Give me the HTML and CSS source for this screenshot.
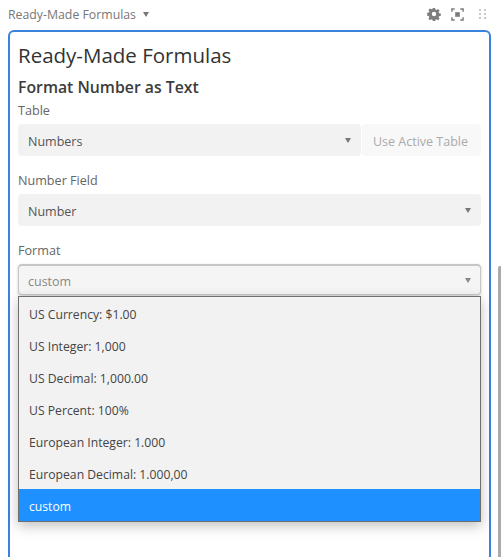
FILE: index.html
```html
<!DOCTYPE html>
<html lang="en">
<head>
  <meta charset="UTF-8" />
  <title>Ready-Made Formulas</title>
  <link rel="stylesheet" href="styles.css">
</head>
<body>
  <div class="topbar">
    <div class="widget-title">Ready-Made Formulas <span class="caret caret-title"></span></div>
    <div class="tools">
      <svg class="tool" width="14" height="14" viewBox="0 0 16 16">
        <path fill="#7d7d7d" fill-rule="evenodd" d="M6.700 1h2.600l.4 2 1.200.5 1.700-1.100 1.800 1.800-1.100 1.700.5 1.200 2 .4v2.600l-2 .4-.5 1.200 1.100 1.700-1.800 1.800-1.700-1.100-1.200.5-.4 2H6.700l-.4-2-1.200-.5-1.700 1.100-1.800-1.800 1.100-1.700-.5-1.200-2-.4V6.700l2-.4.5-1.200-1.100-1.700 1.800-1.800 1.700 1.100 1.200-.5zM8 5.500a2.500 2.500 0 1 0 0 5 2.500 2.500 0 0 0 0-5z"/>
      </svg>
      <svg class="tool" width="13" height="13" viewBox="0 0 14 14">
        <path fill="none" stroke="#7d7d7d" stroke-width="1.600" d="M1 4V1h3M10 1h3v3M13 10v3h-3M4 13H1v-3"/>
        <rect x="4.500" y="4.500" width="5" height="5" fill="#7d7d7d"/>
      </svg>
      <svg class="tool tool-drag" width="7" height="11" viewBox="0 0 7 11">
        <g fill="#c8c8c8">
          <rect x="0" y="0" width="2" height="2"/><rect x="5" y="0" width="2" height="2"/>
          <rect x="0" y="4" width="2" height="2"/><rect x="5" y="4" width="2" height="2"/>
          <rect x="0" y="8" width="2" height="2"/><rect x="5" y="8" width="2" height="2"/>
        </g>
      </svg>
    </div>
  </div>

  <div class="panel">
    <h1>Ready-Made Formulas</h1>
    <h2>Format Number as Text</h2>

    <label class="field-label">Table</label>
    <div class="row">
      <div class="select select-grow">Numbers <span class="caret"></span></div>
      <div class="btn-active">Use Active Table</div>
    </div>

    <label class="field-label">Number Field</label>
    <div class="select">Number <span class="caret"></span></div>

    <label class="field-label">Format</label>
    <div class="combo">
      <div class="select select-open">custom <span class="caret"></span></div>
      <ul class="menu">
        <li>US Currency: $1.00</li>
        <li>US Integer: 1,000</li>
        <li>US Decimal: 1,000.00</li>
        <li>US Percent: 100%</li>
        <li>European Integer: 1.000</li>
        <li>European Decimal: 1.000,00</li>
        <li class="selected">custom</li>
      </ul>
    </div>
  </div>
  <div class="scroll-thumb"></div>
</body>
</html>
```

FILE: styles.css
```css
html, body {
  height: 100%;
}
body {
  margin: 0;
  overflow: hidden;
  background: white;
  color: #333;
  font-family: "Open Sans", sans-serif;
  font-size: 13px;
  position: relative;
}
.topbar {
  display: flex;
  justify-content: space-between;
  align-items: center;
  height: 30px;
  padding: 0 15px 2px 8px;
  box-sizing: border-box;
}
.widget-title {
  color: #777;
  font-size: 12.300px;
}
.tools {
  display: flex;
  align-items: center;
  gap: 10px;
}
.tool-drag {
  margin-left: 5px;
}
.caret {
  float: right;
  width: 0;
  height: 0;
  margin-top: 7px;
  border-left: 3.500px solid transparent;
  border-right: 3.500px solid transparent;
  border-top: 5px solid #777;
}
.caret-title {
  float: none;
  display: inline-block;
  margin: 0 0 2px 4px;
}
.panel {
  margin: 0 10px 0 8px;
  height: 527px;
  box-sizing: border-box;
  border: 2px solid #3b82dc;
  border-bottom: none;
  border-radius: 6px 6px 0 0;
  padding: 8px 8px 0;
}
h1 {
  margin: 0;
  font-size: 20.500px;
  font-weight: 400;
  line-height: 30px;
  color: #333;
}
h2 {
  margin: 5px 0 0;
  font-size: 15.800px;
  font-weight: 600;
  line-height: 24px;
  color: #3c3c3c;
}
.field-label {
  display: block;
  color: #666;
  font-weight: 500;
  font-size: 12.600px;
  line-height: 18px;
  margin: 16px 0 4px;
}
h2 + .field-label {
  margin-top: 3px;
  margin-bottom: 4px;
}
.row {
  display: flex;
  gap: 1px;
}
.select {
  height: 32px;
  line-height: 36px;
  box-sizing: border-box;
  padding: 0 10px;
  background: #f2f2f2;
  border-radius: 4px;
  color: #555;
  font-size: 12.500px;
}
.select .caret {
  margin-top: 14px;
}
.select-grow {
  flex: 1;
}
.btn-active {
  width: 119px;
  height: 32px;
  line-height: 36px;
  padding-right: 2px;
  box-sizing: border-box;
  text-align: center;
  background: #f8f8f8;
  color: #aaa;
  border-radius: 4px;
  font-size: 12.500px;
}
.combo {
  position: relative;
}
.select-open {
  height: 31px;
  background: #f5f5f5;
  border: 1px solid #c6c6c6;
  border-top-width: 2px;
  color: #888;
  line-height: 31px;
  padding: 0 9px;
  box-shadow: 0 1px 3px rgba(0,0,0,0.2);
}
.select-open .caret {
  margin-top: 12px;
  border-top-color: #888;
}
.menu {
  position: absolute;
  left: 0;
  right: 0;
  top: 32px;
  margin: 0;
  padding: 0;
  list-style: none;
  background: #f2f2f2;
  border: 1px solid #6f6f6f;
  box-shadow: 0 4px 12px rgba(0,0,0,0.25);
}
.menu li {
  height: 32px;
  line-height: 36px;
  padding: 0 10px;
  color: #444;
  font-size: 12.200px;
}
.menu li.selected {
  background: #1e90ff;
  color: white;
}
.scroll-thumb {
  position: absolute;
  right: 0;
  top: 266px;
  bottom: 0;
  width: 3px;
  background: #aaa;
  border-radius: 2px 0 0 0;
}
```
